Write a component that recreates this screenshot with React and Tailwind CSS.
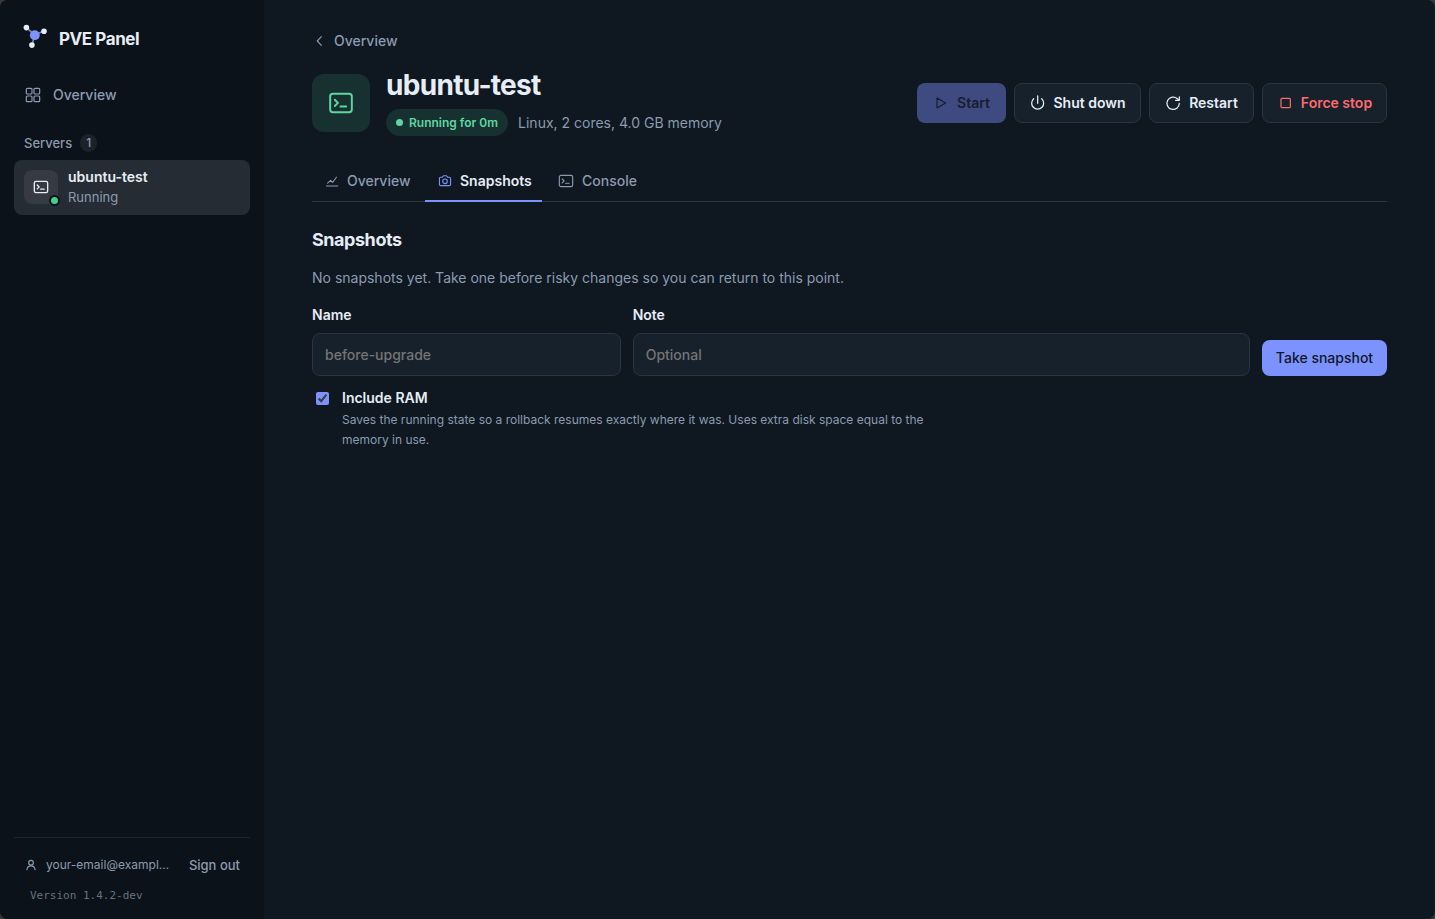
import React from "react";

function Icon({ className, width = 1.5, children }) {
  return (
    <svg
      className={`shrink-0 ${className}`}
      viewBox="0 0 24 24"
      fill="none"
      stroke="currentColor"
      strokeWidth={width}
      strokeLinecap="round"
      strokeLinejoin="round"
      aria-hidden="true"
    >
      {children}
    </svg>
  );
}

function TerminalIcon({ className, width = 2 }) {
  return (
    <Icon className={className} width={width}>
      <rect x="2" y="3.5" width="20" height="17" rx="2.5" />
      <path d="M6.300 9l2.900 2.900-2.900 2.900M11.500 15.300h5.300" />
    </Icon>
  );
}

function Logo() {
  return (
    <svg className="size-6 shrink-0" viewBox="0 0 24 24" aria-hidden="true">
      <path
        d="M11.800 11L3.400 3.600M11.800 11l9-4M11.800 11L9 21"
        stroke="#7b8593"
        strokeWidth="1.7"
      />
      <circle cx="11.800" cy="11.200" r="4.900" fill="#7c93ff" />
      <circle cx="3.400" cy="3.600" r="2.800" fill="#e6edf6" />
      <circle cx="21" cy="7.300" r="2.800" fill="#e6edf6" />
      <circle cx="8.900" cy="21.100" r="2.800" fill="#e6edf6" />
    </svg>
  );
}

function Sidebar() {
  return (
    <aside className="flex w-[264px] shrink-0 flex-col bg-[#0b1219] px-3.5 pt-6 pb-[15px]">
      <div className="flex h-7 items-start gap-3 pl-[9px]">
        <Logo />
        <span className="pt-[3px] text-[17px] leading-6 font-bold tracking-tight text-[#e6edf6]">PVE Panel</span>
      </div>

      <nav className="mt-6">
        <a href="#overview" className="flex h-[38px] items-center gap-3 rounded-lg px-[11px] text-sm font-medium text-[#8b9bb0]">
          <Icon className="size-4" width={1.8}>
            <rect x="2" y="2" width="8.5" height="8.5" rx="1.5" />
            <rect x="13.5" y="2" width="8.5" height="8.5" rx="1.5" />
            <rect x="2" y="13.5" width="8.5" height="8.5" rx="1.5" />
            <rect x="13.5" y="13.5" width="8.5" height="8.5" rx="1.5" />
          </Icon>
          Overview
        </a>

        <div className="mt-5 flex items-center gap-2 px-2.5 text-[13px] leading-[18px] font-medium text-[#8b9bb0]">
          <h2>Servers</h2>
          <span className="rounded-full bg-[#1b2229] px-1.5 text-xs leading-[18px]">1</span>
        </div>

        <a href="#ubuntu-test" className="mt-2 flex h-[55px] items-center gap-2.5 rounded-lg bg-[#262c33] px-2.5 pb-0.5">
          <span className="relative flex size-[34px] items-center justify-center rounded-lg bg-[#363a42] text-[#e6edf6]">
            <TerminalIcon className="size-4" />
            <span className="absolute -right-0.5 -bottom-0.5 size-[11px] rounded-full border-2 border-[#0b1219] bg-[#3ecf8e]" />
          </span>
          <span className="flex flex-col">
            <span className="text-sm leading-[21px] font-semibold text-[#e6edf6]">ubuntu-test</span>
            <span className="text-[13px] leading-5 text-[#8b9bb0]">Running</span>
          </span>
        </a>
      </nav>

      <footer className="mt-auto border-t border-[#1c242d] pt-4">
        <div className="flex items-center gap-2 pr-2.5 pl-2.5 text-[13px] leading-[22px] text-[#8b9bb0]">
          <Icon className="size-3.5" width={2}>
            <circle cx="12" cy="8" r="4" />
            <path d="M5 20c.5-4 3.500-6.500 7-6.500s6.500 2.500 7 6.500" />
          </Icon>
          <span className="text-xs whitespace-nowrap">your-email@exampl…</span>
          <button type="button" className="ml-auto font-medium whitespace-nowrap">Sign out</button>
        </div>
        <p className="mt-3 px-4 font-['DejaVu_Sans_Mono',monospace] text-[11px] leading-4 text-[#66727f]">Version 1.4.2-dev</p>
      </footer>
    </aside>
  );
}

function ActionButton({ className, children }) {
  return (
    <button
      type="button"
      className={`flex h-10 items-center justify-center gap-2 rounded-lg border border-[#283543] bg-[#17212c] text-sm font-semibold whitespace-nowrap ${className}`}
    >
      {children}
    </button>
  );
}

function Header() {
  return (
    <header className="flex items-center justify-between gap-4">
      <div className="flex items-center gap-4">
        <div className="flex size-[58px] shrink-0 items-center justify-center rounded-xl bg-[#173030] text-[#5fd6a0]">
          <TerminalIcon className="size-[26px]" width={1.8} />
        </div>
        <div>
          <h1 className="text-[28px] leading-8 font-bold tracking-tight text-[#e6edf6]">ubuntu-test</h1>
          <div className="mt-2 flex items-center gap-2.5">
            <span className="flex h-[27px] items-center gap-1.5 rounded-full bg-[#173030] px-2.5 text-xs font-semibold text-[#5fd6a0]">
              <span className="size-[7px] rounded-full bg-[#5fd6a0]" />
              Running for 0m
            </span>
            <span className="text-sm text-[#8b9bb0]">Linux, 2 cores, 4.0 GB memory</span>
          </div>
        </div>
      </div>
      <div className="flex gap-2">
        <button type="button" disabled className="flex h-10 w-[89px] items-center justify-center gap-2 rounded-lg bg-[#3f4b80] text-sm font-semibold text-[#161d31]">
          <Icon className="size-4" width={1.8}>
            <path d="M6 4.500v15L19 12z" />
          </Icon>
          Start
        </button>
        <ActionButton className="w-[127px] text-[#e6edf6]">
          <Icon className="size-4" width={1.9}>
            <path d="M13 1.500v11M7 5.500a9 9 0 1 0 12 0" />
          </Icon>
          Shut down
        </ActionButton>
        <ActionButton className="w-[105px] text-[#e6edf6]">
          <Icon className="size-4" width={1.9}>
            <path d="M21.500 12.500A9.300 9.300 0 1 1 18.500 5.500L21 8M21.500 3V8.200h-5.500" />
          </Icon>
          Restart
        </ActionButton>
        <ActionButton className="w-[125px] text-[#ff6b6b]">
          <Icon className="size-4" width={1.8}>
            <rect x="6" y="5" width="14" height="14" rx="1.500" />
          </Icon>
          Force stop
        </ActionButton>
      </div>
    </header>
  );
}

function Tabs() {
  return (
    <nav className="mt-6 flex border-b border-[#283543] text-sm font-medium text-[#8b9bb0]">
      <a href="#metrics" className="-mb-px flex h-[42px] w-[113px] items-center gap-2 border-b-2 border-transparent pt-0.5 pl-[13px]">
        <Icon className="size-3.5" width={1.9}>
          <path d="M2.500 20.500h19.500M4.500 15.500L9.500 11l3.500 3.500 6.500-9" />
        </Icon>
        Overview
      </a>
      <a href="#snapshots" aria-current="page" className="-mb-px flex h-[42px] w-[117px] items-center gap-2 border-b-2 border-[#7c93ff] pt-0.5 pl-[13px] font-semibold text-[#e6edf6]">
        <Icon className="size-3.5 text-[#7c93ff]" width={1.9}>
          <path d="M4.500 5.500h3L9.500 3h5l2 2.500h3a2 2 0 0 1 2 2V18a2 2 0 0 1-2 2h-15a2 2 0 0 1-2-2V7.500a2 2 0 0 1 2-2z" />
          <circle cx="12" cy="12.500" r="4" />
        </Icon>
        Snapshots
      </a>
      <a href="#console" className="-mb-px flex h-[42px] items-center gap-2 border-b-2 border-transparent px-4 pt-0.5">
        <TerminalIcon className="size-4" width={1.7} />
        Console
      </a>
    </nav>
  );
}

function SnapshotForm() {
  const field =
    "h-[43px] w-full rounded-lg border border-[#283543] bg-[#17212c] px-3 text-sm font-medium text-[#e6edf6] placeholder:text-[#757575]";
  return (
    <section className="mt-6">
      <h2 className="text-lg leading-7 font-bold tracking-tight text-[#e6edf6]">Snapshots</h2>
      <p className="mt-3 text-sm leading-6 text-[#8b9bb0]">
        No snapshots yet. Take one before risky changes so you can return to this point.
      </p>
      <form className="mt-3" onSubmit={(e) => e.preventDefault()}>
        <div className="grid grid-cols-[1fr_2fr_125px] items-end gap-3">
          <div>
            <label htmlFor="name" className="mb-1.5 block pt-px text-sm leading-6 font-semibold text-[#e6edf6]">Name</label>
            <input id="name" type="text" placeholder="before-upgrade" className={field} />
          </div>
          <div>
            <label htmlFor="note" className="mb-1.5 block pt-px text-sm leading-6 font-semibold text-[#e6edf6]">Note</label>
            <input id="note" type="text" placeholder="Optional" className={field} />
          </div>
          <button type="submit" className="h-9 rounded-lg bg-[#7c93ff] text-sm font-medium whitespace-nowrap text-[#10172a]">
            Take snapshot
          </button>
        </div>
        <div className="mt-3 flex gap-[13px] pl-1">
          <input id="ram" type="checkbox" defaultChecked className="mt-1 size-[13px] shrink-0 accent-[#7c93ff]" />
          <div className="max-w-[610px]">
            <label htmlFor="ram" className="block text-sm leading-5 font-semibold text-[#e6edf6]">Include RAM</label>
            <p className="mt-0.5 text-xs leading-5 text-[#8b9bb0]">
              Saves the running state so a rollback resumes exactly where it was. Uses extra disk space equal to the memory in use.
            </p>
          </div>
        </div>
      </form>
    </section>
  );
}

export default function App() {
  return (
    <div className="bg-[#35373a] font-[Inter,sans-serif]">
      <div className="flex min-h-screen overflow-hidden rounded-lg bg-[#0f1720]">
        <Sidebar />
        <main className="min-w-0 flex-1 px-12 pt-[30px]">
          <a href="#overview" className="mb-[17px] flex w-fit items-center gap-2 text-sm leading-[22px] font-medium text-[#8b9bb0]">
            <Icon className="size-3.5" width={2}>
              <path d="M16 4.500L9 12l7 7.500" />
            </Icon>
            Overview
          </a>
          <Header />
          <Tabs />
          <SnapshotForm />
        </main>
      </div>
    </div>
  );
}
